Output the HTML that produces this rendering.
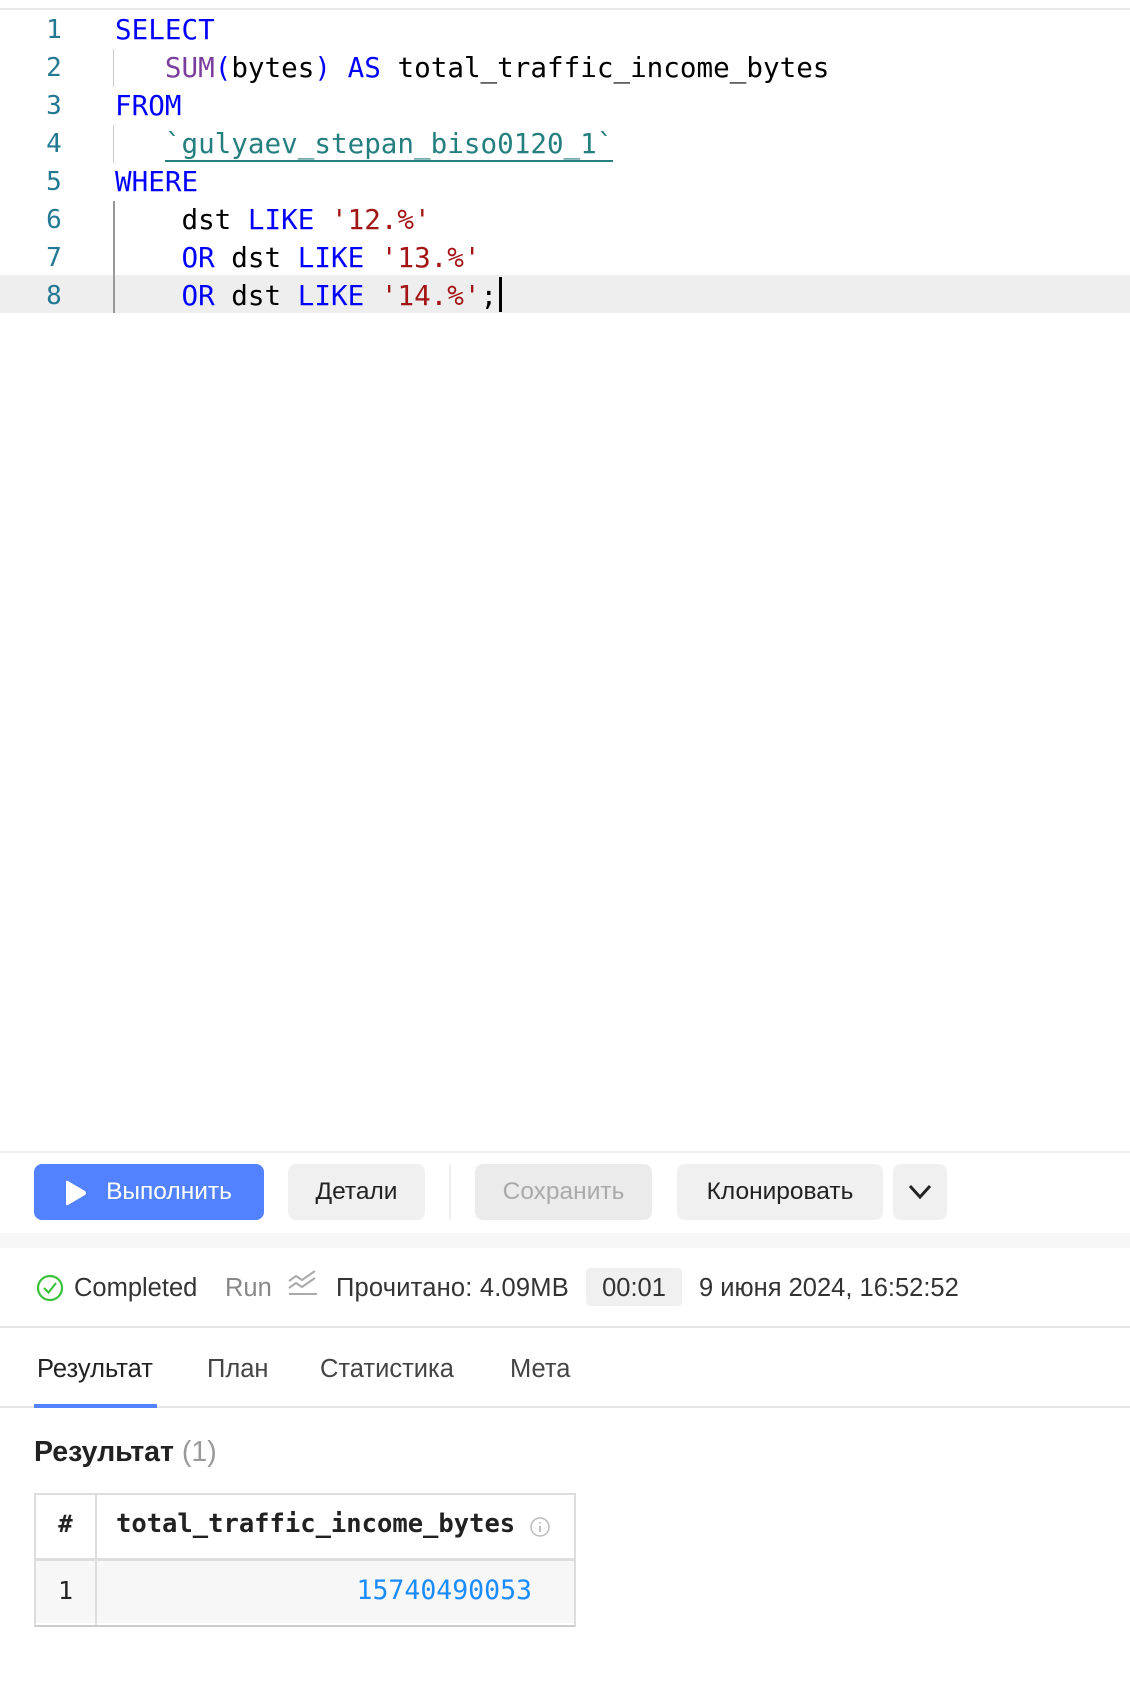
<!DOCTYPE html>
<html><head><meta charset="utf-8"><style>
body{margin:0;width:1130px;height:1688px;background:#fff;position:relative;overflow:hidden;font-family:"Liberation Sans",sans-serif;}
.a{position:absolute}
.mono{font-family:"DejaVu Sans Mono","Liberation Mono",monospace}
.ln{position:absolute;left:30px;width:48px;text-align:center;color:#237893;font-size:26px;}
.code{position:absolute;left:115px;font-size:27.6px;white-space:pre;color:#000;}
.k{color:#0000ff}.f{color:#7a3e9d}.s{color:#a31515}.t{color:#267f7f}
.btn{position:absolute;top:1164px;height:56px;border-radius:8px;background:#f0f0f0;font-size:24.5px;line-height:56px;text-align:center;color:#222}
.st{position:absolute;top:1270px;font-size:25.5px;line-height:36px;color:#333}
.tab{position:absolute;top:1350px;font-size:25.5px;color:#444;line-height:38px}
</style></head><body>
<div class="a" style="left:0;top:8px;width:1130px;height:2px;background:#e8e8e8"></div>
<div class="a" style="left:0;top:275px;width:1130px;height:38px;background:#eeeeee"></div>
<div class="a" style="left:113px;top:49px;width:1px;height:38px;background:#ccc"></div>
<div class="a" style="left:113px;top:125px;width:1px;height:38px;background:#ccc"></div>
<div class="a" style="left:113px;top:201px;width:2px;height:112px;background:#999"></div>
<div class="ln mono" style="top:15px">1</div>
<div class="ln mono" style="top:53px">2</div>
<div class="ln mono" style="top:91px">3</div>
<div class="ln mono" style="top:129px">4</div>
<div class="ln mono" style="top:167px">5</div>
<div class="ln mono" style="top:205px">6</div>
<div class="ln mono" style="top:243px">7</div>
<div class="ln mono" style="top:281px">8</div>
<div class="code mono" style="top:13px"><span class="k">SELECT</span></div>
<div class="code mono" style="top:51px">   <span class="f">SUM</span><span class="k">(</span>bytes<span class="k">)</span> <span class="k">AS</span> total_traffic_income_bytes</div>
<div class="code mono" style="top:89px"><span class="k">FROM</span></div>
<div class="code mono" style="top:127px">   <span class="t" style="border-bottom:2px solid #267f7f">`gulyaev_stepan_biso0120_1`</span></div>
<div class="code mono" style="top:165px"><span class="k">WHERE</span></div>
<div class="code mono" style="top:203px">    dst <span class="k">LIKE</span> <span class="s">'12.%'</span></div>
<div class="code mono" style="top:241px">    <span class="k">OR</span> dst <span class="k">LIKE</span> <span class="s">'13.%'</span></div>
<div class="code mono" style="top:279px">    <span class="k">OR</span> dst <span class="k">LIKE</span> <span class="s">'14.%'</span>;</div>
<div class="a" style="left:499px;top:277px;width:3px;height:35px;background:#000"></div>

<div class="a" style="left:0;top:1151px;width:1130px;height:2px;background:#eee"></div>
<div class="btn" style="left:34px;width:230px;background:#5282ff;color:#fff"><svg class="a" style="left:28px;top:15px" width="26" height="28" viewBox="0 0 26 28"><path d="M4 3 Q4 1 6 2 L23 12 Q25 14 23 16 L6 26 Q4 27 4 25Z" fill="#fff"/></svg><span style="position:relative;left:20px">Выполнить</span></div>
<div class="btn" style="left:288px;width:137px">Детали</div>
<div class="a" style="left:449px;top:1164px;width:2px;height:56px;background:#eee"></div>
<div class="btn" style="left:475px;width:177px;background:#ebebeb;color:#aaa">Сохранить</div>
<div class="btn" style="left:677px;width:206px">Клонировать</div>
<div class="btn" style="left:893px;width:54px"><svg class="a" style="left:14px;top:18px" width="26" height="20"><path d="M3 4 L13 15 L23 4" stroke="#222" stroke-width="3" fill="none"/></svg></div>
<div class="a" style="left:0;top:1233px;width:1130px;height:15px;background:#f7f7f7"></div>

<svg class="a" style="left:36px;top:1274px" width="28" height="28"><circle cx="14" cy="14" r="12" stroke="#3bc13b" stroke-width="2.2" fill="none"/><path d="M8 14 L12.5 18.5 L20 9" stroke="#3bc13b" stroke-width="2.2" fill="none"/></svg>
<div class="st" style="left:74px">Completed</div>
<div class="st" style="left:225px;color:#888">Run</div>
<svg class="a" style="left:287px;top:1268px" width="32" height="30"><path d="M2 13 L9 8 L15 12 L28 3 M2 20 L9 15 L15 19 L28 10 M2 26 L30 26" stroke="#aaa" stroke-width="2" fill="none"/></svg>
<div class="st" style="left:336px;letter-spacing:0.2px">Прочитано: 4.09MB</div>
<div class="a" style="left:586px;top:1268px;width:96px;height:38px;background:#f0f0f0;border-radius:4px"></div>
<div class="st" style="left:586px;width:96px;text-align:center">00:01</div>
<div class="st" style="left:699px">9 июня 2024, 16:52:52</div>
<div class="a" style="left:0;top:1326px;width:1130px;height:2px;background:#e5e5e5"></div>

<div class="tab" style="left:37px;color:#222">Результат</div>
<div class="tab" style="left:207px">План</div>
<div class="tab" style="left:320px">Статистика</div>
<div class="tab" style="left:510px">Мета</div>
<div class="a" style="left:0;top:1406px;width:1130px;height:2px;background:#e5e5e5"></div>
<div class="a" style="left:34px;top:1404px;width:123px;height:4px;background:#5282ff"></div>

<div class="a" style="left:34px;top:1436px;font-size:28.5px;font-weight:bold;color:#222">Результат <span style="font-weight:normal;color:#999">(1)</span></div>

<div class="a" style="left:34px;top:1493px;width:538px;height:130px;border:2px solid #ddd;border-bottom-color:#ccc;"></div>
<div class="a" style="left:36px;top:1561px;width:538px;height:62px;background:#f7f7f7"></div>
<div class="a" style="left:36px;top:1558px;width:538px;height:3px;background:#ddd"></div>
<div class="a" style="left:95px;top:1495px;width:2px;height:130px;background:#ddd"></div>
<div class="a mono" style="left:36px;width:59px;top:1510px;text-align:center;font-size:24px;font-weight:bold;color:#222">#</div>
<div class="a mono" style="left:116px;top:1509px;font-size:25.5px;font-weight:bold;color:#222">total_traffic_income_bytes</div>
<svg class="a" style="left:529px;top:1516px" width="22" height="22"><circle cx="11" cy="11" r="9" stroke="#bbb" stroke-width="1.5" fill="none"/><path d="M11 10 V16 M11 6 V7.5" stroke="#bbb" stroke-width="1.8"/></svg>
<div class="a mono" style="left:36px;width:59px;top:1576px;text-align:center;font-size:25px;color:#222">1</div>
<div class="a mono" style="left:300px;width:232px;top:1575px;text-align:right;font-size:26.5px;color:#1a8cff">15740490053</div>
</body></html>
